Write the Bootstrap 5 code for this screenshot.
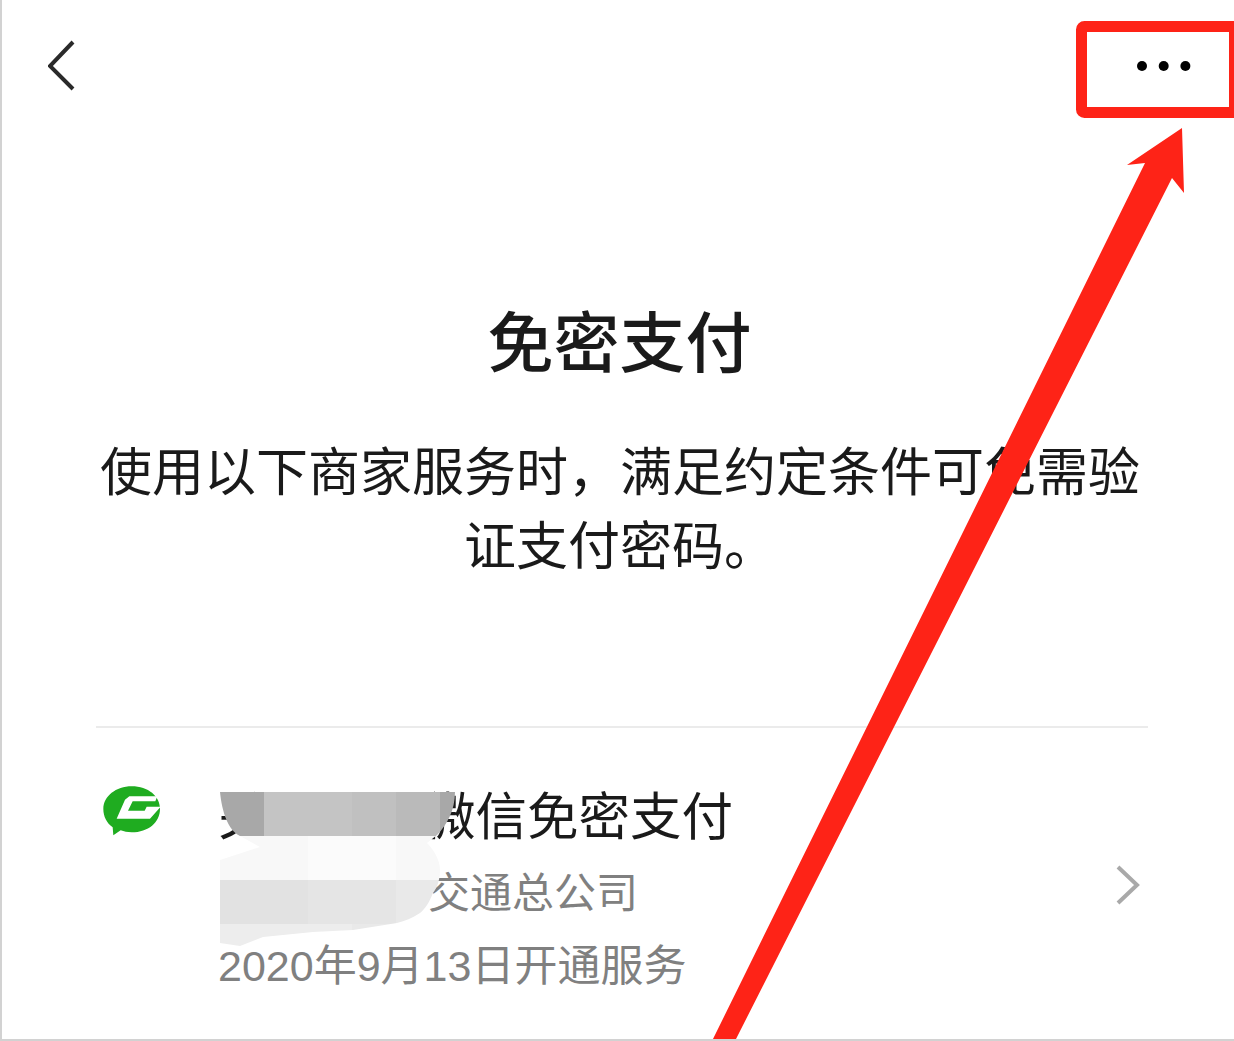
<!DOCTYPE html>
<html lang="zh-CN">
<head>
<meta charset="utf-8">
<title>免密支付</title>
<link href="https://cdn.jsdelivr.net/npm/bootstrap@5.3.0/dist/css/bootstrap.min.css" rel="stylesheet">
<style>
html, body { margin: 0; height: 100%; background: #fff; overflow: hidden; }
body { font-family: "Liberation Sans", "Noto Sans CJK SC", sans-serif; color: #1a1a1a; }
.phone-page { position: relative; width: 1234px; height: 1041px; border-left: 2px solid #d2d2d2; border-bottom: 2px solid #d2d2d2; overflow: hidden; }
.top-bar { height: 132px; padding: 40px 38px 0 46px; }
.back-icon { width: 30px; height: 52px; display: block; }
.more-dots { width: 60px; height: 14px; display: block; margin-top: 19px; }
.page-title { font-size: 66px; font-weight: 500; line-height: 84px; margin: 170px 0 0 3px; }
.page-desc { font-size: 52px; line-height: 74px; width: 1060px; margin: 50px auto 142px auto; position: relative; left: 2px; }
.rule-line { height: 2px; background: #ebebeb; margin: 0 86px 0 94px; }
.merchant-row { padding: 0 93px 0 98px; margin-top: 53px; }
.merchant-logo { width: 64px; height: 54px; flex: none; margin-top: 2px; }
.merchant-text { margin-left: 54px; }
.merchant-name { font-size: 51.5px; line-height: 72px; margin-bottom: 4px; color: #1a1a1a; white-space: nowrap; }
.merchant-sub { font-size: 42px; line-height: 73px; color: #808080; white-space: nowrap; }
.merchant-date { font-size: 43px; line-height: 72px; color: #808080; white-space: nowrap; }
.row-chevron { width: 26px; height: 42px; flex: none; margin-top: 83px; }
.overlay-art { position: absolute; left: -2px; top: 0; width: 1234px; height: 1041px; pointer-events: none; }
</style>
</head>
<body>
<div class="phone-page">
  <div class="top-bar d-flex justify-content-between align-items-start">
    <svg class="back-icon" viewBox="0 0 30 52" aria-label="返回"><path d="M25 2 L2 26 L25 49" fill="none" stroke="#2a2a2a" stroke-width="4"/></svg>
    <svg class="more-dots" viewBox="0 0 60 14" aria-label="更多"><circle cx="6" cy="7" r="5" fill="#000"/><circle cx="27.700" cy="7" r="5" fill="#000"/><circle cx="49.400" cy="7" r="5" fill="#000"/></svg>
  </div>
  <h1 class="page-title text-center">免密支付</h1>
  <p class="page-desc text-center">使用以下商家服务时，满足约定条件可免需验证支付密码。</p>
  <div class="rule-line"></div>
  <div class="merchant-row d-flex align-items-start">
    <svg class="merchant-logo" viewBox="0 0 192 162" aria-label="商家图标">
      <path d="M95 10 C145 10 180 40 180 78 C180 118 145 148 95 148 C82 148 72 146 62 142 L40 157 L38 133 C20 120 10 100 10 78 C10 40 48 10 95 10 Z" fill="#1fac20"/>
      <path d="M88 40 H172 L166 55 H98 L84 83 H134 L140 71 H182 L150 107 H50 L75 50 Z" fill="#fff"/>
    </svg>
    <div class="merchant-text flex-grow-1">
      <div class="merchant-name">关　　　微信免密支付</div>
      <div class="merchant-sub">　　　　　交通总公司</div>
      <div class="merchant-date">2020年9月13日开通服务</div>
    </div>
    <svg class="row-chevron" viewBox="0 0 26 42" aria-hidden="true"><path d="M3 3 L22 21 L3 39" fill="none" stroke="#a9a9a9" stroke-width="4"/></svg>
  </div>
  <svg class="overlay-art" viewBox="0 0 1234 1041" aria-hidden="true">
    <defs>
      <clipPath id="smear">
        <path d="M220 792 H455 C455 810 447 825 437 835 L427 843 C434 850 440 860 440 870 C440 880 437 888 433 893 C429 903 425 909 420 913 C412 918 405 921 397 923 L353 930 L313 932 L263 937 L240 946 L220 943 V860 L260 847 L240 836 C228 830 222 812 220 792 Z"/>
      </clipPath>
    </defs>
    <g clip-path="url(#smear)">
      <rect x="220" y="792" width="44" height="44" fill="#a8a8a8"/>
      <rect x="264" y="792" width="88" height="44" fill="#c4c4c4"/>
      <rect x="352" y="792" width="44" height="44" fill="#c0c0c0"/>
      <rect x="396" y="792" width="44" height="44" fill="#bababa"/>
      <rect x="440" y="792" width="20" height="44" fill="#a8a8a8"/>
      <rect x="220" y="836" width="88" height="44" fill="#f8f8f8"/>
      <rect x="308" y="836" width="88" height="44" fill="#fbfbfb"/>
      <rect x="396" y="836" width="60" height="44" fill="#f8f8f8"/>
      <rect x="220" y="880" width="88" height="44" fill="#e2e2e2"/>
      <rect x="308" y="880" width="88" height="44" fill="#e5e5e5"/>
      <rect x="396" y="880" width="60" height="44" fill="#e9e9e9"/>
      <rect x="220" y="924" width="132" height="30" fill="#ededed"/>
      <rect x="352" y="924" width="60" height="30" fill="#e9e9e9"/>
    </g>
    <rect x="1081.500" y="26.500" width="170" height="86" rx="3" fill="none" stroke="#fe2317" stroke-width="11"/>
    <rect x="1229" y="32" width="5" height="75" fill="#fe2317"/>
    <polygon points="1182,128 1184,193 1172,178 735,1041 712,1041 1145,163 1127,165" fill="#fe2317"/>
  </svg>
</div>
</body>
</html>
